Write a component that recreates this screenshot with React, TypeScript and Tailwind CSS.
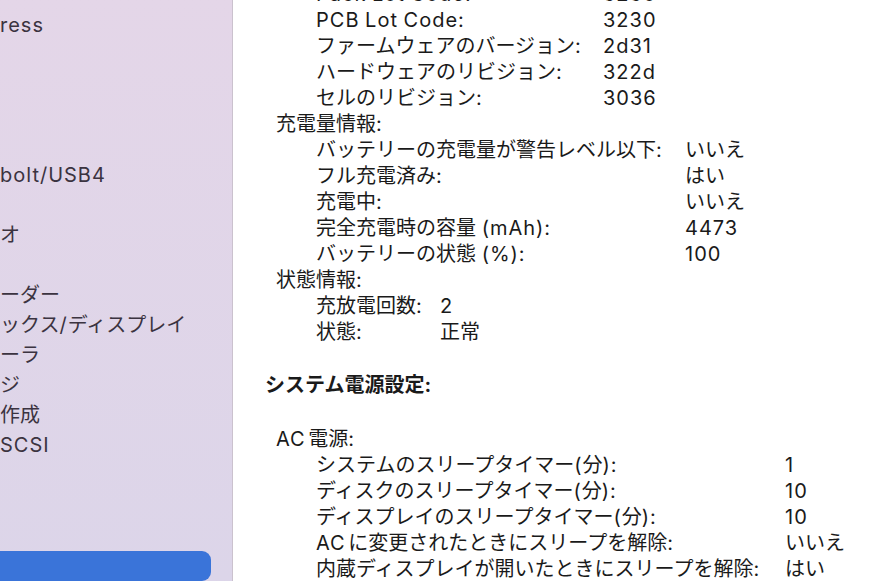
import React from 'react';

type Row = { label: string; value?: string; level: 1 | 2 };

const sidebarItems: string[] = [
  'ress',
  '',
  '',
  '',
  '',
  'bolt/USB4',
  '',
  'オ',
  '',
  'ーダー',
  'ックス/ディスプレイ',
  'ーラ',
  'ジ',
  '作成',
  'SCSI',
  '',
  '',
  '',
];

// battery detail block, label column width per group
const batteryGroups: { labelWidth: string; rows: Row[] }[] = [
  {
    labelWidth: 'w-[287px]',
    rows: [
      { label: 'Pack Lot Code:', value: '3230', level: 2 },
      { label: 'PCB Lot Code:', value: '3230', level: 2 },
      { label: 'ファームウェアのバージョン:', value: '2d31', level: 2 },
      { label: 'ハードウェアのリビジョン:', value: '322d', level: 2 },
      { label: 'セルのリビジョン:', value: '3036', level: 2 },
    ],
  },
  {
    labelWidth: 'w-[369px]',
    rows: [
      { label: '充電量情報:', level: 1 },
      { label: 'バッテリーの充電量が警告レベル以下:', value: 'いいえ', level: 2 },
      { label: 'フル充電済み:', value: 'はい', level: 2 },
      { label: '充電中:', value: 'いいえ', level: 2 },
      { label: '完全充電時の容量 (mAh):', value: '4473', level: 2 },
      { label: 'バッテリーの状態 (%):', value: '100', level: 2 },
    ],
  },
  {
    labelWidth: 'w-[124px]',
    rows: [
      { label: '状態情報:', level: 1 },
      { label: '充放電回数:', value: '2', level: 2 },
      { label: '状態:', value: '正常', level: 2 },
    ],
  },
];

const acRows: Row[] = [
  { label: 'システムのスリープタイマー(分):', value: '1', level: 2 },
  { label: 'ディスクのスリープタイマー(分):', value: '10', level: 2 },
  { label: 'ディスプレイのスリープタイマー(分):', value: '10', level: 2 },
  { label: 'AC に変更されたときにスリープを解除:', value: 'いいえ', level: 2 },
  { label: '内蔵ディスプレイが開いたときにスリープを解除:', value: 'はい', level: 2 },
];

// latin glyphs in the original are a bit wider than Inter, so space them out a little.
// a space right before japanese text is narrower in the original.
function Txt({ children }: { children?: string }) {
  if (!children) return null;
  const parts = children.split(/([\x21-\x7E]+|\s+)/).filter((p) => p !== '');
  return (
    <>
      {parts.map((p, i) => {
        if (/^[\x21-\x7E]+$/.test(p)) {
          return (
            <span key={i} className="tracking-[1px]">
              {p}
            </span>
          );
        }
        if (/^\s+$/.test(p) && parts[i + 1] && !/^[\x21-\x7E]/.test(parts[i + 1])) {
          return (
            <span key={i} className="tracking-[-3px]">
              {p}
            </span>
          );
        }
        return <React.Fragment key={i}>{p}</React.Fragment>;
      })}
    </>
  );
}

function InfoRow({ row, labelWidth }: { row: Row; labelWidth: string }) {
  if (row.level === 1) {
    return (
      <div className="h-[26px] pl-[43px] whitespace-nowrap">
        <Txt>{row.label}</Txt>
      </div>
    );
  }
  return (
    <div className="flex h-[26px] pl-[83px] whitespace-nowrap">
      <span className={`${labelWidth} shrink-0`}>
        <Txt>{row.label}</Txt>
      </span>
      <span>
        <Txt>{row.value}</Txt>
      </span>
    </div>
  );
}

export default function App() {
  return (
    <div
      className="flex h-[581px] w-[877px] overflow-hidden bg-white text-[20px] leading-[26px]"
      style={{ fontFamily: 'Inter, "Noto Sans CJK JP", sans-serif' }}
    >
      {/* sidebar */}
      <div className="flex w-[233px] shrink-0 flex-col border-r border-[#cbc2ce] bg-gradient-to-b from-[#e4d6e8] to-[#dcd5e9] pt-[10px] text-[#3b3340]">
        {sidebarItems.map((item, i) => (
          <div key={i} className="h-[30px] leading-[30px] whitespace-nowrap">
            <Txt>{item}</Txt>
          </div>
        ))}
        <div className="mt-px h-[30px] w-[211px] shrink-0 rounded-r-[9px] bg-[#3a74d9]"></div>
      </div>

      {/* detail pane */}
      <div className="flex-1 text-[#1a1a1a]">
        <div className="-mt-[19px]">
          {batteryGroups.map((group, gi) => (
            <div key={gi}>
              {group.rows.map((row, ri) => (
                <InfoRow key={ri} row={row} labelWidth={group.labelWidth} />
              ))}
            </div>
          ))}
        </div>

        <div className="mt-[27px] h-[26px] pl-[32px] font-bold whitespace-nowrap">システム電源設定:</div>

        <div className="mt-[28px] h-[26px] pl-[43px] whitespace-nowrap">
          <Txt>AC 電源:</Txt>
        </div>
        {acRows.map((row, i) => (
          <InfoRow key={i} row={row} labelWidth="w-[469px]" />
        ))}
      </div>
    </div>
  );
}
